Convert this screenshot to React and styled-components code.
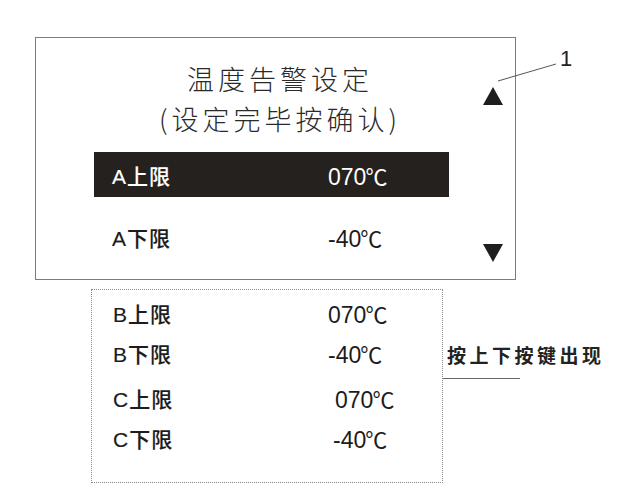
import styled, { createGlobalStyle } from 'styled-components';

const GlobalStyle = createGlobalStyle`
    html, body {
        margin: 0;
        padding: 0;
        background: #ffffff;
    }
`

const Page = styled.div`
    position: relative;
    width: 624px;
    height: 498px;
    padding: 37px 0 0 35px;
    box-sizing: border-box;
    font-family: "Liberation Sans", "Noto Sans CJK SC", sans-serif;
    color: #1c1c1c;
`

const Screen = styled.div`
    width: 481px;
    height: 243px;
    box-sizing: border-box;
    border: 1px solid #7c7c7c;
    display: flex;
`

const Main = styled.div`
    flex: 1;
    display: flex;
    flex-direction: column;
`

const Title = styled.div`
    padding: 21px 0 0 42px;
    text-align: center;
    font-family: "Noto Sans CJK SC", sans-serif;
    font-weight: 300;
    font-size: 27px;
    line-height: 40px;
    letter-spacing: 4px;
    color: #2a2a2a;
`

const Rows = styled.div`
    margin: 13px 0 0 58px;
    width: 355px;
    display: flex;
    flex-direction: column;
    gap: 17px;
`

const Row = styled.div`
    height: 45px;
    display: grid;
    grid-template-columns: 216px 1fr;
    align-items: center;
    padding-left: 18px;
    box-sizing: border-box;
    background: ${props => props.$active ? '#24211e' : 'transparent'};
    color: ${props => props.$active ? '#ffffff' : '#1c1c1c'};
`

const Label = styled.span`
    font-size: 21px;
    letter-spacing: 1px;
    font-weight: 500;
    -webkit-text-stroke: 0.15px currentColor;
`

const Value = styled.span`
    font-size: 23px;
    margin-left: ${props => props.$shift || 0}px;
`

const Unit = styled.span`
    font-family: "Noto Sans CJK SC", sans-serif;
    font-size: 22px;
    margin-left: -1px;
`

const ScrollBar = styled.div`
    width: 33px;
    display: flex;
    flex-direction: column;
    justify-content: space-between;
    align-items: center;
    padding: 49px 12px 17px 0;
    box-sizing: border-box;
`

const Lower = styled.div`
    display: flex;
    margin: 9px 0 0 56px;
`

const HiddenList = styled.div`
    width: 352px;
    height: 194px;
    box-sizing: border-box;
    border: 1px dotted #8a8a8a;
    padding: 3px 0 0 21px;
`

const ListRow = styled.div`
    height: 40px;
    display: grid;
    grid-template-columns: 215px 1fr;
    align-items: center;
    margin-top: ${props => props.$gap || 0}px;
`

const Note = styled.div`
    margin-top: 55px;
    display: flex;
    flex-direction: column;
`

const NoteText = styled.span`
    padding-left: 4px;
    font-family: "Noto Sans CJK SC", sans-serif;
    font-weight: 700;
    font-size: 19px;
    letter-spacing: 3.5px;
    line-height: 22px;
    color: #222;
`

const NoteLine = styled.div`
    margin-top: 12px;
    width: 77px;
    height: 0;
    border-top: 1.5px solid #6a6a6a;
`

const Marker = styled.span`
    position: absolute;
    left: 560px;
    top: 46px;
    font-size: 22px;
    font-weight: 300;
    color: #222;
`

const Leader = styled.svg`
    position: absolute;
    left: 496px;
    top: 60px;
`

function Arrow({ down }) {
    return (
        <svg width="20" height="18" viewBox="0 0 20 18">
            {down
                ? <polygon points="0,0 20,0 10,18" fill="#1e1e1e" />
                : <polygon points="10,0 20,18 0,18" fill="#1e1e1e" />}
        </svg>
    )
}

// temperature reading: digits plus a compact ℃ sign
function Temp({ value, shift }) {
    return (
        <Value $shift={shift}>
            {value}<Unit>℃</Unit>
        </Value>
    )
}

const visibleRows = [
    { label: 'A上限', value: '070', active: true },
    { label: 'A下限', value: '-40' },
]

const moreRows = [
    { label: 'B上限', value: '070' },
    { label: 'B下限', value: '-40' },
    { label: 'C上限', value: '070', gap: 5, shift: 7 },
    { label: 'C下限', value: '-40', shift: 5 },
]

export default function App() {
    return (
        <Page>
            <GlobalStyle />
            <Screen>
                <Main>
                    <Title>
                        <div>温度告警设定</div>
                        <div>(设定完毕按确认)</div>
                    </Title>
                    <Rows>
                        {visibleRows.map(row => (
                            <Row key={row.label} $active={row.active}>
                                <Label>{row.label}</Label>
                                <Temp value={row.value} />
                            </Row>
                        ))}
                    </Rows>
                </Main>
                <ScrollBar>
                    <Arrow />
                    <Arrow down />
                </ScrollBar>
            </Screen>

            <Lower>
                <HiddenList>
                    {moreRows.map(row => (
                        <ListRow key={row.label} $gap={row.gap}>
                            <Label>{row.label}</Label>
                            <Temp value={row.value} shift={row.shift} />
                        </ListRow>
                    ))}
                </HiddenList>
                <Note>
                    <NoteText>按上下按键出现</NoteText>
                    <NoteLine />
                </Note>
            </Lower>

            <Leader width="64" height="24" viewBox="0 0 64 24">
                <line x1="2" y1="21" x2="60" y2="4" stroke="#555" strokeWidth="1" />
            </Leader>
            <Marker>1</Marker>
        </Page>
    )
}
